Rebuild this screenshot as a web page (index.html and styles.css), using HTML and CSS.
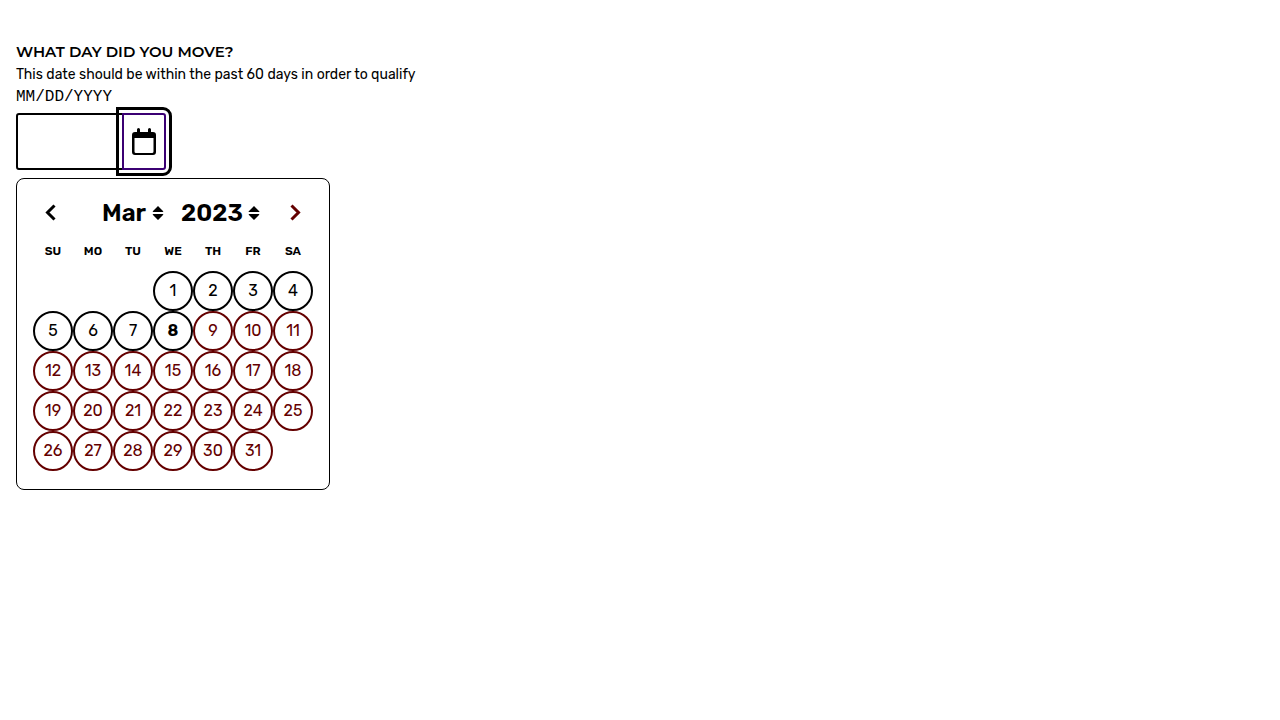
FILE: index.html
```html
<!DOCTYPE html>
<html lang="en">
<head>
<meta charset="utf-8">
<meta name="viewport" content="width=device-width, initial-scale=1">
<title>Move date</title>
<link rel="stylesheet" href="styles.css">
</head>
<body>
<main class="page">
  <label class="label" for="move-date">WHAT DAY DID YOU MOVE?</label>
  <p class="hint" id="hint">This date should be within the past 60 days in order to qualify</p>
  <p class="format" id="format">MM/DD/YYYY</p>
  <div class="field">
    <input class="date-input" id="move-date" type="text" aria-describedby="hint format">
    <button class="toggle" type="button" aria-label="Choose date">
      <svg width="24" height="28" viewBox="0 0 24 28" aria-hidden="true"><path fill="currentColor" fill-rule="evenodd" d="M5 4V1.500Q5 0 6.500 0T8 1.500V4H16V1.500Q16 0 17.500 0T19 1.500V4H21Q24 4 24 7V24Q24 27 21 27H3Q0 27 0 24V7Q0 4 3 4H5ZM2.500 10V23.500Q2.500 25 4 25H20Q21.500 25 21.500 23.500V10Z"/></svg>
    </button>
  </div>
  <section class="calendar" aria-label="Calendar">
    <div class="calendar-head">
      <button class="nav" type="button" aria-label="Previous month"><svg width="12" height="18" viewBox="0 0 12 18" aria-hidden="true"><path d="M9.500 1.500 2.500 8.500l7 7"/></svg></button>
      <div class="selects">
        <div class="select-wrap">
          <select class="select month" aria-label="Month"><option>Jan</option><option>Feb</option><option selected>Mar</option></select>
          <svg class="sort" width="12" height="14" viewBox="0 0 12 14" aria-hidden="true"><path d="M6 0 11 5Q12 6 10.500 6H1.500Q0 6 1 5ZM6 14 11 9Q12 8 10.500 8H1.500Q0 8 1 9Z"/></svg>
        </div>
        <div class="select-wrap">
          <select class="select year" aria-label="Year"><option>2022</option><option selected>2023</option></select>
          <svg class="sort" width="12" height="14" viewBox="0 0 12 14" aria-hidden="true"><path d="M6 0 11 5Q12 6 10.500 6H1.500Q0 6 1 5ZM6 14 11 9Q12 8 10.500 8H1.500Q0 8 1 9Z"/></svg>
        </div>
      </div>
      <button class="nav" type="button" aria-label="Next month" disabled><svg width="12" height="18" viewBox="0 0 12 18" aria-hidden="true"><path d="M2.500 1.500 9.500 8.500l-7 7"/></svg></button>
    </div>
    <table class="grid">
      <thead><tr><th>SU</th><th>MO</th><th>TU</th><th>WE</th><th>TH</th><th>FR</th><th>SA</th></tr></thead>
      <tbody>
        <tr><td></td><td></td><td></td><td><button class="day">1</button></td><td><button class="day">2</button></td><td><button class="day">3</button></td><td><button class="day">4</button></td></tr>
        <tr><td><button class="day">5</button></td><td><button class="day">6</button></td><td><button class="day">7</button></td><td><button class="day today" aria-current="date">8</button></td><td><button class="day" disabled>9</button></td><td><button class="day" disabled>10</button></td><td><button class="day" disabled>11</button></td></tr>
        <tr><td><button class="day" disabled>12</button></td><td><button class="day" disabled>13</button></td><td><button class="day" disabled>14</button></td><td><button class="day" disabled>15</button></td><td><button class="day" disabled>16</button></td><td><button class="day" disabled>17</button></td><td><button class="day" disabled>18</button></td></tr>
        <tr><td><button class="day" disabled>19</button></td><td><button class="day" disabled>20</button></td><td><button class="day" disabled>21</button></td><td><button class="day" disabled>22</button></td><td><button class="day" disabled>23</button></td><td><button class="day" disabled>24</button></td><td><button class="day" disabled>25</button></td></tr>
        <tr><td><button class="day" disabled>26</button></td><td><button class="day" disabled>27</button></td><td><button class="day" disabled>28</button></td><td><button class="day" disabled>29</button></td><td><button class="day" disabled>30</button></td><td><button class="day" disabled>31</button></td><td></td></tr>
      </tbody>
    </table>
  </section>
</main>
</body>
</html>
```

FILE: styles.css
```css
* { box-sizing: border-box; }

body {
  margin: 0;
  background: #fff;
  color: #000;
  font-family: Rubik, Roboto, sans-serif;
}

button, input, select { font: inherit; color: inherit; }

.page { padding: 41px 16px 16px; }

.label {
  display: block;
  margin-bottom: 1px;
  font: 600 15px/22px Montserrat, Inter, sans-serif;
}

.hint {
  margin: 0;
  font-size: 14px;
  line-height: 22px;
}

.format {
  margin: 0 0 5px;
  font: 16px/22px "Liberation Mono", monospace;
}

.field {
  display: flex;
  height: 57px;
  margin-bottom: 8px;
}

.date-input {
  width: 108px;
  padding: 0 12px;
  border: 2px solid #000;
  border-radius: 3px 0 0 3px;
  background: #fff;
}

.toggle {
  display: grid;
  place-items: center;
  width: 44px;
  margin-left: -2px;
  padding: 0;
  border: 2px solid #3b0073;
  border-radius: 0 3px 3px 0;
  background: #fff;
  color: #000;
  outline: 3px solid #000;
  outline-offset: 3px;
}

.calendar {
  width: fit-content;
  padding: 16px 16px 18px;
  border: 1px solid #000;
  border-radius: 8px;
}

.calendar-head {
  display: flex;
  align-items: center;
  justify-content: space-between;
  height: 36px;
}

.nav {
  display: grid;
  place-items: center;
  width: 36px;
  height: 36px;
  padding: 0;
  border: 0;
  background: none;
}

.nav path {
  fill: none;
  stroke: currentColor;
  stroke-width: 3;
  stroke-linecap: butt;
}

.nav:disabled { color: #640000; }

.selects { display: flex; gap: 17px; padding-left: 16px; }

.select-wrap { display: flex; align-items: center; gap: 5px; }

.select {
  appearance: none;
  height: 36px;
  padding: 0;
  border: 0;
  background: none;
  font-size: 24px;
  font-weight: 600;
}

.month { width: 45px; }
.year { width: 62px; }

.sort { fill: currentColor; }

.grid { border-collapse: collapse; }

.grid th {
  width: 40px;
  height: 40px;
  padding: 0;
  font-size: 12px;
  font-weight: 600;
}

.grid td { width: 40px; height: 40px; padding: 0; }

.day {
  display: block;
  width: 40px;
  height: 40px;
  padding: 0 0 2px;
  border: 2px solid currentColor;
  border-radius: 50%;
  background: none;
  font-size: 16px;
}

.day:disabled { color: #640000; }

.today { font-weight: 700; }
```
